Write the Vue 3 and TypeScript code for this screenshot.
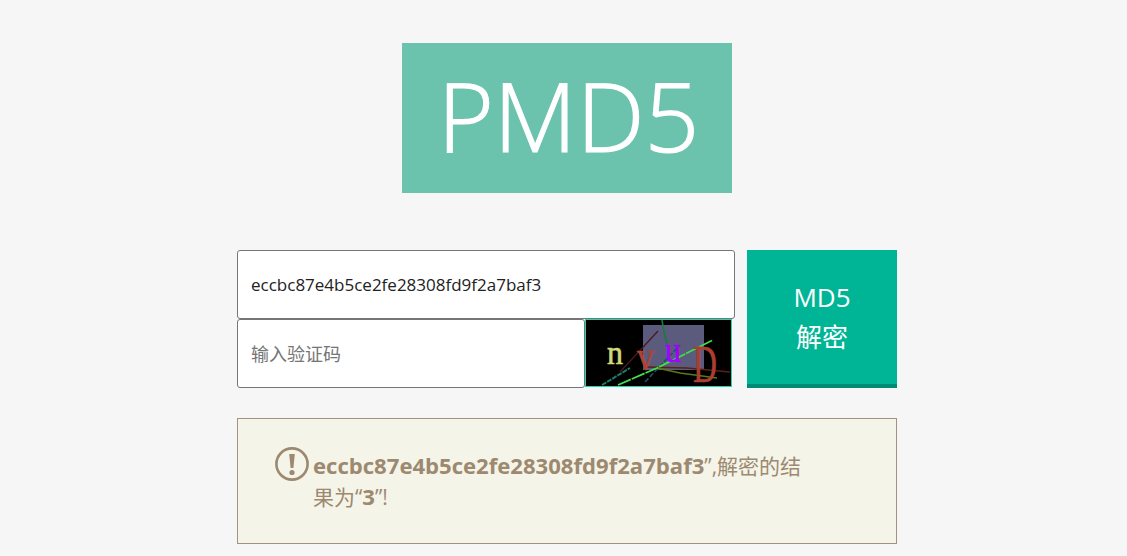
<template>
  <div class="page">
    <div class="logo">PMD5</div>

    <form class="form" @submit.prevent>
      <div class="fields">
        <input class="field field-hash" type="text" :value="hash" />
        <div class="captcha-row">
          <input class="field field-code" type="text" placeholder="输入验证码" />
          <div class="captcha">
            <svg viewBox="0 0 145 66" width="145" height="66">
              <rect width="145" height="66" fill="#000" />
              <rect x="57" y="5" width="61" height="45" fill="#5b5b7e" />
              <polyline
                v-for="l in captchaLines"
                :key="l.points"
                :points="l.points"
                :stroke="l.color"
                :stroke-dasharray="l.dash"
                :stroke-width="l.width"
                fill="none"
              />
              <text
                v-for="c in captchaChars"
                :key="c.ch"
                class="captcha-char"
                :x="c.x"
                :y="c.y"
                :fill="c.color"
                :stroke="c.color"
                :font-size="c.size"
                :textLength="c.width"
                lengthAdjust="spacingAndGlyphs"
              >{{ c.ch }}</text>
            </svg>
          </div>
        </div>
      </div>
      <button class="submit" type="submit">MD5<br />解密</button>
    </form>

    <div class="alert">
      <svg class="alert-icon" viewBox="0 0 34 34" width="34" height="34">
        <circle cx="17" cy="17" r="15.6" fill="none" stroke="#9c8970" stroke-width="2.6" />
        <path d="M14.2 7h5.6l-1.4 14h-2.8z" fill="#9c8970" />
        <circle cx="17" cy="25.5" r="2.6" fill="#9c8970" />
      </svg>
      <p class="alert-text"><b>{{ hash }}</b>”,解密的结果为“<b>3</b>”!</p>
    </div>
  </div>
</template>

<script setup lang="ts">
const hash = 'eccbc87e4b5ce2fe28308fd9f2a7baf3'

const captchaLines = [
  { points: '76,0 78,12 81,24', color: '#1b7a3c', dash: '', width: 1.6 },
  { points: '72,11 34,52', color: '#4a1a20', dash: '', width: 1.3 },
  { points: '16,65 44,48', color: '#1f7a68', dash: '5 1', width: 2 },
  { points: '59,62 94,25', color: '#1f4f60', dash: '5 2', width: 1.6 },
  { points: '61,47 101,48 144,52', color: '#5a2015', dash: '', width: 1.6 },
  { points: '71,48 94,53 131,58', color: '#5c7a12', dash: '', width: 1.6 },
  { points: '32,65 71,48 127,20', color: '#3fe04c', dash: '14 1', width: 1.8 },
]

const captchaChars = [
  { ch: 'n', x: 21, y: 44, size: 34, width: 16, color: '#cfd97a' },
  { ch: 'v', x: 51, y: 50, size: 40, width: 17, color: '#b0432f' },
  { ch: 'u', x: 79, y: 42, size: 36, width: 16, color: '#a300ff' },
  { ch: 'D', x: 107, y: 62, size: 52, width: 24, color: '#aa3e30' },
]
</script>

<style scoped>
.page {
  display: flex;
  flex-direction: column;
  align-items: center;
  padding: 43px 0 0 7px;
  height: 556px;
  box-sizing: border-box;
  overflow: hidden;
  font-family: "Open Sans", "Noto Sans CJK SC", sans-serif;
}

.logo {
  width: 330px;
  height: 150px;
  background: #6bc3ae;
  color: #fff;
  font-size: 96px;
  font-weight: 300;
  -webkit-text-stroke: 1.2px #fff;
  line-height: 143px;
  text-align: center;
  text-indent: 3px;
}

.form {
  display: flex;
  gap: 12px;
  width: 660px;
  margin-top: 57px;
}

.fields {
  width: 498px;
}

.field {
  display: block;
  box-sizing: border-box;
  height: 69px;
  padding: 0 13px;
  background: #fff;
  border: 1px solid #767676;
  border-radius: 3px;
  outline: none;
  color: #222;
  font-family: inherit;
  font-size: 18px;
}

.field-hash {
  width: 498px;
  font-size: 17px;
}

.captcha-row {
  display: flex;
}

.field-code {
  width: 348px;
}

.captcha {
  box-sizing: border-box;
  width: 147px;
  height: 68px;
  border: 1px solid #23d6ad;
}

.captcha svg {
  display: block;
}

.captcha-char {
  font-family: "Liberation Serif", serif;
  stroke-width: 0.6;
}

.submit {
  width: 150px;
  height: 138px;
  padding: 0;
  background: #00b596;
  border: 0;
  border-bottom: 4px solid #008c74;
  color: #fff;
  font-family: inherit;
  font-size: 26px;
  line-height: 40px;
}

.alert {
  display: flex;
  align-items: flex-start;
  gap: 4px;
  box-sizing: border-box;
  width: 660px;
  height: 126px;
  margin-top: 30px;
  padding: 28px 0 0 37px;
  background: #f5f4e8;
  border: 1px solid #a39280;
  color: #9c8970;
  font-size: 21px;
  line-height: 31px;
}

.alert-icon {
  flex: none;
}

.alert-text {
  width: 497px;
  margin: 4px 0 0;
}

.alert-text b {
  font-size: 22.1px;
  line-height: 1;
}
</style>

<style>
body {
  background: #f6f6f6;
}
</style>
